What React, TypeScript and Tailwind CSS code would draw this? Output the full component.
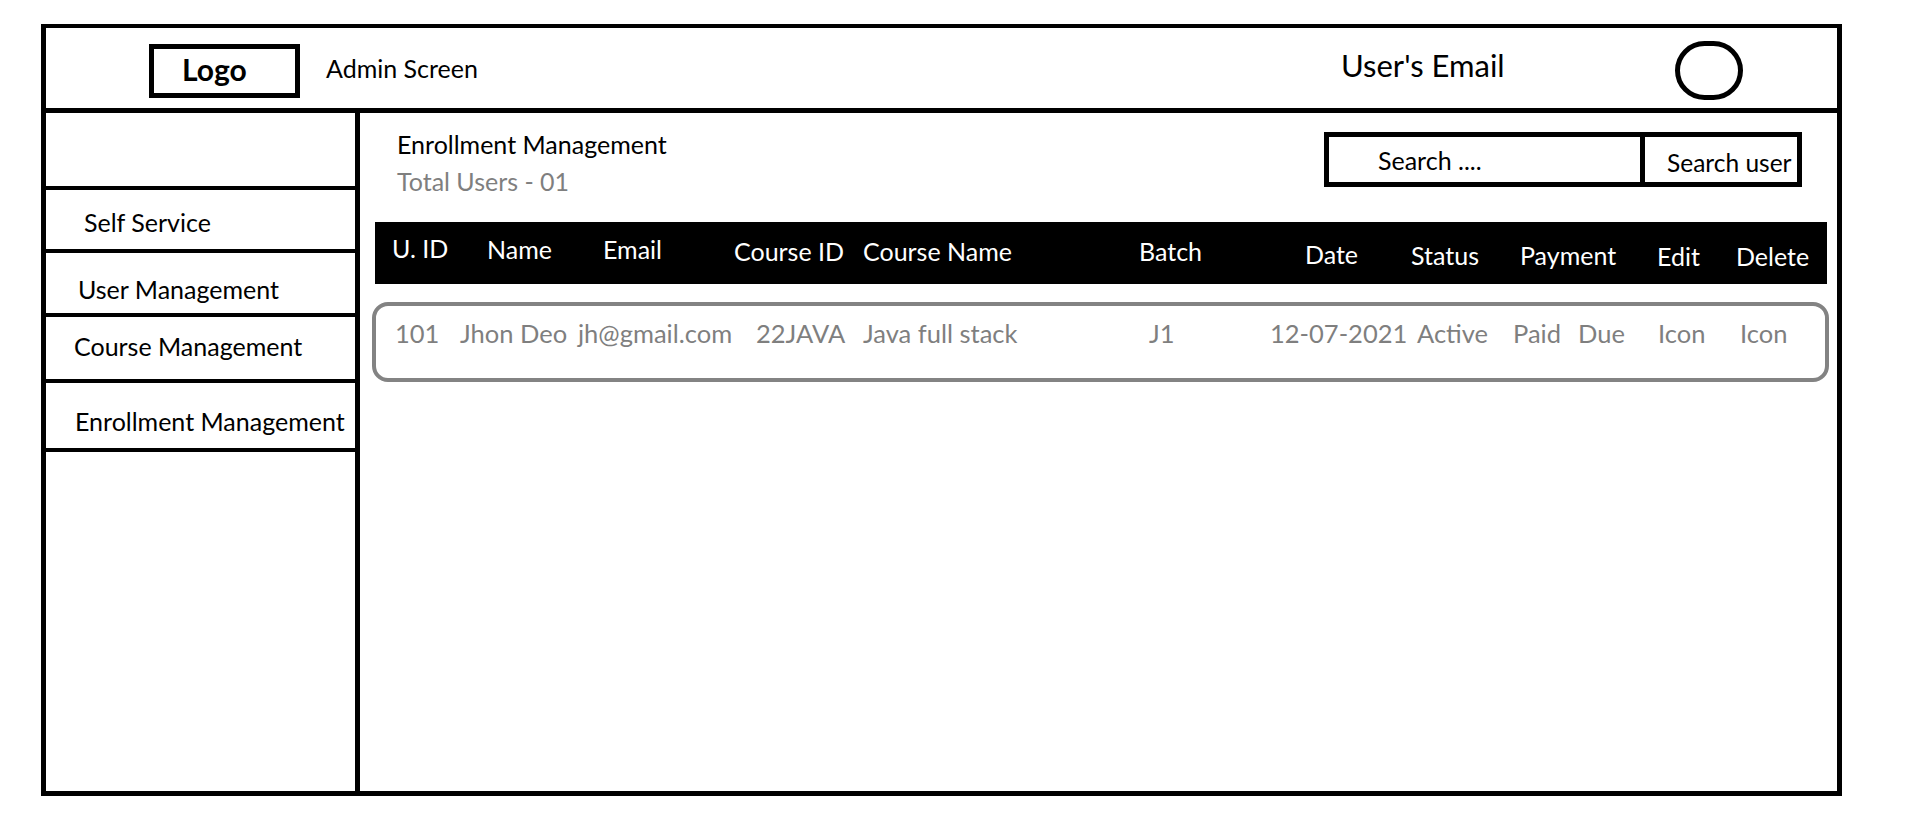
const sideItems = [
  { label: "", h: "h-[77px]", pad: "" },
  { label: "Self Service", h: "h-[63px]", pad: "pt-[20px] pl-[38px]" },
  { label: "User Management", h: "h-[64px]", pad: "pt-[24px] pl-[32px]" },
  { label: "Course Management", h: "h-[66px]", pad: "pt-[17px] pl-[28px]" },
  { label: "Enrollment Management", h: "h-[69px]", pad: "pt-[26px] pl-[29px]" },
];

const columns = [
  { label: "U. ID", w: "w-[95px]", pt: "pt-[14px]" },
  { label: "Name", w: "w-[116px]", pt: "pt-[15px]" },
  { label: "Email", w: "w-[131px]", pt: "pt-[15px]" },
  { label: "Course ID", w: "w-[129px]", pt: "pt-[17px]" },
  { label: "Course Name", w: "w-[276px]", pt: "pt-[17px]" },
  { label: "Batch", w: "w-[166px]", pt: "pt-[17px]" },
  { label: "Date", w: "w-[106px]", pt: "pt-[20px]" },
  { label: "Status", w: "w-[109px]", pt: "pt-[21px]" },
  { label: "Payment", w: "w-[137px]", pt: "pt-[21px]" },
  { label: "Edit", w: "w-[79px]", pt: "pt-[22px]" },
  { label: "Delete", w: "flex-1", pt: "pt-[22px]" },
];

const cells = [
  { text: "101", w: "w-[65px]" },
  { text: "Jhon Deo", w: "w-[118px]" },
  { text: "jh@gmail.com", w: "w-[178px]" },
  { text: "22JAVA", w: "w-[107px]" },
  { text: "Java full stack", w: "w-[286px]" },
  { text: "J1", w: "w-[121px]" },
  { text: "12-07-2021", w: "w-[147px]" },
  { text: "Active", w: "w-[96px]" },
  { text: "Paid", w: "w-[65px]" },
  { text: "Due", w: "w-[80px]" },
  { text: "Icon", w: "w-[82px]" },
  { text: "Icon", w: "flex-1" },
];

function Header() {
  return (
    <header className="flex items-start h-[85px] border-b-[5px] border-black whitespace-nowrap">
      <div className="ml-[103px] mt-[16px] w-[151px] h-[54px] border-[5px] border-black pl-[28px] pt-[5px]">
        <span className="text-[30px] leading-none font-bold">Logo</span>
      </div>
      <span className="ml-[26px] mt-[28px] text-[25px] leading-none">Admin Screen</span>
      <div className="ml-auto flex items-start w-[496px]">
        <span className="w-[334px] mt-[22px] text-[31px] leading-none">User's Email</span>
        <div className="mt-[13px] w-[68px] h-[59px] rounded-full border-[5px] border-black" />
      </div>
    </header>
  );
}

function Sidebar() {
  return (
    <aside className="w-[314px] shrink-0 border-r-[5px] border-black">
      {sideItems.map((s, i) => (
        <div key={i} className={`${s.h} ${s.pad} border-b-4 border-black text-[25px] leading-none whitespace-nowrap`}>
          {s.label}
        </div>
      ))}
    </aside>
  );
}

export default function App() {
  return (
    <div className="w-[1914px] h-[822px] bg-white pt-[24px] pl-[41px] font-['Lato',sans-serif] text-black">
      <div className="w-[1801px] h-[772px] border-[5px] border-t-4 border-black flex flex-col">
        <Header />
        <div className="flex flex-1">
          <Sidebar />
          <main className="flex-1 whitespace-nowrap">
            <div className="h-[109px] flex items-start">
              <div className="ml-[37px] mt-[19px]">
                <p className="text-[25px] leading-none">Enrollment Management</p>
                <p className="mt-[12px] text-[25px] leading-none text-[#7f7f7f]">Total Users - 01</p>
              </div>
              <div className="ml-auto mr-[35px] mt-[19px] w-[478px] h-[55px] border-[5px] border-black flex text-[25px] leading-none">
                <div className="w-[316px] border-r-[5px] border-black pl-[49px] pt-[11px]">Search ....</div>
                <div className="flex-1 pl-[22px] pt-[14px] text-[24.5px]">Search user</div>
              </div>
            </div>

            <div className="ml-[15px] mr-[10px] h-[62px] bg-black text-white flex items-start pl-[17px] text-[25px] leading-none">
              {columns.map((c) => (
                <div key={c.label} className={`${c.w} ${c.pt}`}>
                  {c.label}
                </div>
              ))}
            </div>

            <div className="mt-[18px] ml-[12px] mr-[8px] h-[80px] rounded-[16px] border-4 border-[#838383] flex items-start pl-[19px] pt-[15px] text-[25.5px] leading-none text-[#7f7f7f]">
              {cells.map((c, i) => (
                <div key={i} className={c.w}>
                  {c.text}
                </div>
              ))}
            </div>
          </main>
        </div>
      </div>
    </div>
  );
}
